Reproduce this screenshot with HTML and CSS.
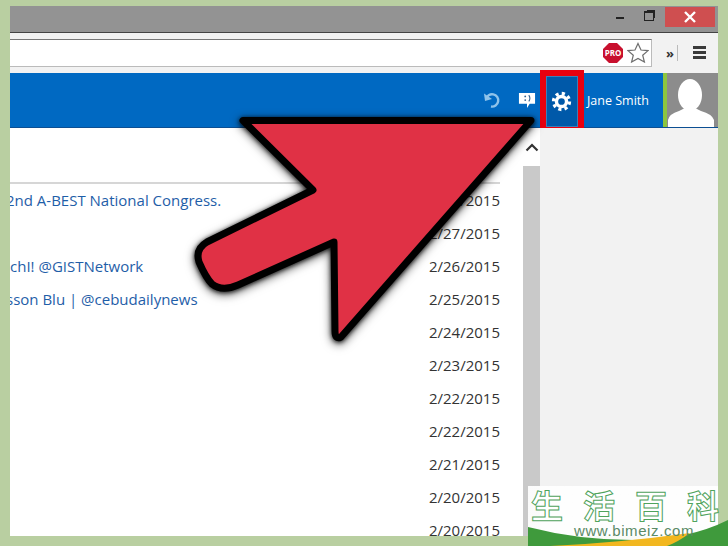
FILE: index.html
```html
<!DOCTYPE html>
<html lang="en">
<head>
    <meta charset="UTF-8">
    <meta name="viewport" content="width=device-width, initial-scale=1.0">
    <title>Settings gear</title>
    <link rel="stylesheet" href="styles.css">
</head>
<body>
    <div class="window">
        <div class="titlebar">
            <span class="win-min"></span>
            <span class="win-restore"></span>
            <span class="win-close">
                <svg width="14" height="14" viewBox="0 0 14 14"><path d="M2 2 12 12M12 2 2 12" stroke="#fff" stroke-width="2.4"/></svg>
            </span>
        </div>

        <div class="toolbar">
            <div class="address">
                <svg class="pro" width="20" height="20" viewBox="0 0 20 20">
                    <polygon points="6,0 14,0 20,6 20,14 14,20 6,20 0,14 0,6" fill="#c8102e"/>
                    <text x="10" y="13" text-anchor="middle" class="pro-text">PRO</text>
                </svg>
                <svg width="22" height="21" viewBox="0 0 22 21">
                    <polygon points="11,1.5 14,8 21,8.6 15.7,13.2 17.4,20 11,16.4 4.6,20 6.3,13.2 1,8.6 8,8" fill="#fff" stroke="#6e6e6e" stroke-width="1.2"/>
                </svg>
            </div>
            <span class="more">»</span>
            <span class="sep"></span>
            <div class="menu"><i></i><i></i><i></i></div>
        </div>

        <header class="appbar">
            <svg class="undo" width="18" height="18" viewBox="0 0 18 18">
                <path d="M3 8A6.2 6.2 0 1 1 8 15.500" fill="none" stroke="#8fc3ea" stroke-width="2.4"/>
                <path d="M1 2.500 2 10 9 8Z" fill="#8fc3ea"/>
            </svg>
            <svg class="feedback" width="20" height="17" viewBox="0 0 20 19">
                <path d="M1 1H19V13H13L10 18V13H1Z" fill="#fff"/>
                <circle cx="8" cy="5" r="1" fill="#33608f"/>
                <circle cx="8" cy="9" r="1" fill="#33608f"/>
                <path d="M12 3.500Q14.500 7 12 10.500" fill="none" stroke="#33608f" stroke-width="1.2"/>
            </svg>
            <div class="gear-cell">
                <svg width="21" height="21" viewBox="0 0 22 22">
                    <circle cx="11" cy="11" r="8.400" fill="none" stroke="#fff" stroke-width="3.400" stroke-dasharray="3.300 3.300"/>
                    <circle cx="11" cy="11" r="5.300" fill="none" stroke="#fff" stroke-width="3.600"/>
                </svg>
            </div>
            <span class="user-name">Jane Smith</span>
            <div class="avatar">
                <svg width="51" height="55" viewBox="0 0 51 55">
                    <ellipse cx="23" cy="22" rx="12" ry="16" fill="#fff"/>
                    <path d="M1 55V47Q2 41 12 38L18 35H28L34 38Q45 41 47 47V55Z" fill="#fff"/>
                </svg>
            </div>
        </header>

        <div class="content">
            <main class="list">
                <div class="list-head"></div>
                <div class="row"><span class="subject">2nd A-BEST National Congress.</span><span class="date">2/28/2015</span></div>
                <div class="row"><span class="subject"></span><span class="date">2/27/2015</span></div>
                <div class="row"><span class="subject subject-inset">chI! @GISTNetwork</span><span class="date">2/26/2015</span></div>
                <div class="row"><span class="subject">sson Blu | @cebudailynews</span><span class="date">2/25/2015</span></div>
                <div class="row"><span class="subject"></span><span class="date">2/24/2015</span></div>
                <div class="row"><span class="subject"></span><span class="date">2/23/2015</span></div>
                <div class="row"><span class="subject"></span><span class="date">2/22/2015</span></div>
                <div class="row"><span class="subject"></span><span class="date">2/22/2015</span></div>
                <div class="row"><span class="subject"></span><span class="date">2/21/2015</span></div>
                <div class="row"><span class="subject"></span><span class="date">2/20/2015</span></div>
                <div class="row"><span class="subject"></span><span class="date">2/20/2015</span></div>
            </main>
            <div class="scrollbar">
                <div class="scroll-up">
                    <svg width="14" height="9" viewBox="0 0 14 9"><path d="M1.500 7.500 7 2l5.500 5.500" fill="none" stroke="#333" stroke-width="2.200"/></svg>
                </div>
                <div class="scroll-thumb"></div>
            </div>
            <aside class="sidebar"></aside>
        </div>
    </div>

    <!-- big pointer drawn over the page -->
    <svg class="arrow" width="728" height="546" viewBox="0 0 728 546">
        <path d="M243 120.500H531L341 337Q335 340 335 331L334 242L238 285Q222 292 212 284Q206 278 199 262Q195 249 207 242L313 190Z" fill="#e03145" stroke="#000" stroke-width="7" stroke-linejoin="round"/>
    </svg>

    <div class="watermark">
        <div class="wm-cn">生活百科</div>
        <div class="wm-url">www.bimeiz.com</div>
        <svg class="wm-swoosh" width="200" height="26" viewBox="0 0 200 26">
            <path d="M0 7Q50 20 105 20Q160 20 200 0V26H0Z" fill="#3f9a3c"/>
            <path d="M22 26Q90 23 162 13Q150 22 139 26Z" fill="#f2b71f"/>
        </svg>
    </div>
</body>
</html>
```

FILE: styles.css
```css
body {
    margin: 0;
    height: 546px;
    overflow: hidden;
    position: relative;
    background-color: #b9cfa1;
    font-family: "Open Sans", "Liberation Sans", sans-serif;
}

.window {
    margin: 6px 10px 0;
    width: 708px;
    height: 530px;
    display: flex;
    flex-direction: column;
    overflow: hidden;
    background-color: white;
}

.titlebar {
    height: 26px;
    background-color: #939393;
    border-bottom: 1px solid #444;
    display: flex;
    justify-content: flex-end;
    align-items: flex-start;
}

.win-min {
    width: 8px;
    height: 2px;
    margin: 11px 20px 0 0;
    background-color: #222;
}

.win-restore {
    width: 8px;
    height: 7px;
    margin: 5px 11px 0 0;
    border: 1px solid #222;
    border-top-width: 2px;
    box-shadow: 2px -2px 0 -1px #222;
}

.win-close {
    width: 50px;
    height: 20px;
    margin: 1px 3px 0 0;
    background-color: #cf4f50;
    display: flex;
    align-items: center;
    justify-content: center;
}

.toolbar {
    height: 40px;
    box-sizing: border-box;
    padding: 5px 10px 6px 0;
    background-color: #f2f2f2;
    display: flex;
    align-items: center;
}

.address {
    width: 642px;
    height: 28px;
    box-sizing: border-box;
    padding-right: 2px;
    background-color: white;
    border: 1px solid #bbb;
    border-top-color: #777;
    border-left: 0;
    display: flex;
    align-items: center;
    justify-content: flex-end;
    gap: 4px;
}

.pro-text {
    font-size: 8px;
    font-weight: 700;
    fill: white;
}

.more {
    margin-left: 14px;
    font-size: 13px;
    font-weight: 700;
    color: #333;
}

.sep {
    width: 1px;
    height: 16px;
    margin-left: 3px;
    background-color: #bbb;
}

.menu {
    margin-left: 15px;
    width: 13px;
    display: flex;
    flex-direction: column;
    gap: 2px;
}

.menu i {
    height: 3px;
    background-color: #3a3a3a;
}

.appbar {
    height: 55px;
    box-sizing: border-box;
    background-color: #0069c2;
    border-bottom: 1px solid #0c4f93;
    display: flex;
    align-items: center;
    flex-shrink: 0;
}

.undo {
    margin-left: auto;
}

.feedback {
    margin-left: 16px;
}

.gear-cell {
    width: 32px;
    height: 51px;
    margin: 3px 0 0 9px;
    padding-right: 2px;
    align-self: flex-start;
    box-sizing: border-box;
    background-color: #0059a9;
    border: 1px solid #3b7fb8;
    outline: 6px solid #e8000f;
    display: flex;
    align-items: center;
    justify-content: center;
}

.user-name {
    margin-left: 9px;
    width: 76px;
    font-size: 12.500px;
    font-weight: 500;
    color: white;
}

.avatar {
    width: 51px;
    height: 54px;
    overflow: hidden;
    background-color: #8c8c8c;
    border-left: 4px solid #8dc63f;
}

.avatar svg {
    display: block;
}

.content {
    flex: 1;
    display: flex;
    min-height: 0;
}

.list {
    width: 513px;
    flex-shrink: 0;
    padding-right: 23px;
    box-sizing: border-box;
}

.list-head {
    height: 54px;
    border-bottom: 2px solid #d6d6d6;
}

.row {
    height: 33px;
    box-sizing: border-box;
    padding-bottom: 1px;
    display: flex;
    align-items: center;
    justify-content: space-between;
}

.subject {
    margin-left: -4px;
    font-size: 15px;
    font-weight: 500;
    color: #1f5ea8;
}

.subject-inset {
    margin-left: 0;
}

.date {
    font-size: 15px;
    color: #333;
}

.scrollbar {
    width: 17px;
    display: flex;
    flex-direction: column;
}

.scroll-up {
    height: 38px;
    display: flex;
    align-items: center;
    justify-content: center;
}

.scroll-thumb {
    flex: 1;
    background-color: #c9c9c9;
}

.sidebar {
    flex: 1;
    background-color: #f2f2f2;
}

.arrow {
    position: absolute;
    left: 0;
    top: 0;
    filter: drop-shadow(0 1px 2px rgba(0, 0, 0, 0.8)) drop-shadow(0 2px 4px rgba(0, 0, 0, 0.6));
}

.watermark {
    position: absolute;
    left: 528px;
    top: 486px;
    width: 200px;
    height: 60px;
    overflow: hidden;
    background: linear-gradient(to right, rgba(255, 255, 255, 0.92) 190px, transparent 190px);
}

.wm-cn {
    width: 190px;
    overflow: hidden;
    white-space: nowrap;
    font-family: "Noto Sans CJK SC", sans-serif;
    font-size: 32px;
    font-weight: 700;
    line-height: 36px;
    letter-spacing: 20px;
    margin-left: 3px;
    color: white;
    -webkit-text-stroke: 1px #4fa35c;
}

.wm-url {
    position: relative;
    z-index: 1;
    text-align: center;
    padding-left: 12px;
    font-family: "Liberation Sans", sans-serif;
    font-size: 15px;
    letter-spacing: 0.600px;
    color: #5b8a66;
}

.wm-swoosh {
    position: absolute;
    left: 0;
    bottom: 0;
}
```
